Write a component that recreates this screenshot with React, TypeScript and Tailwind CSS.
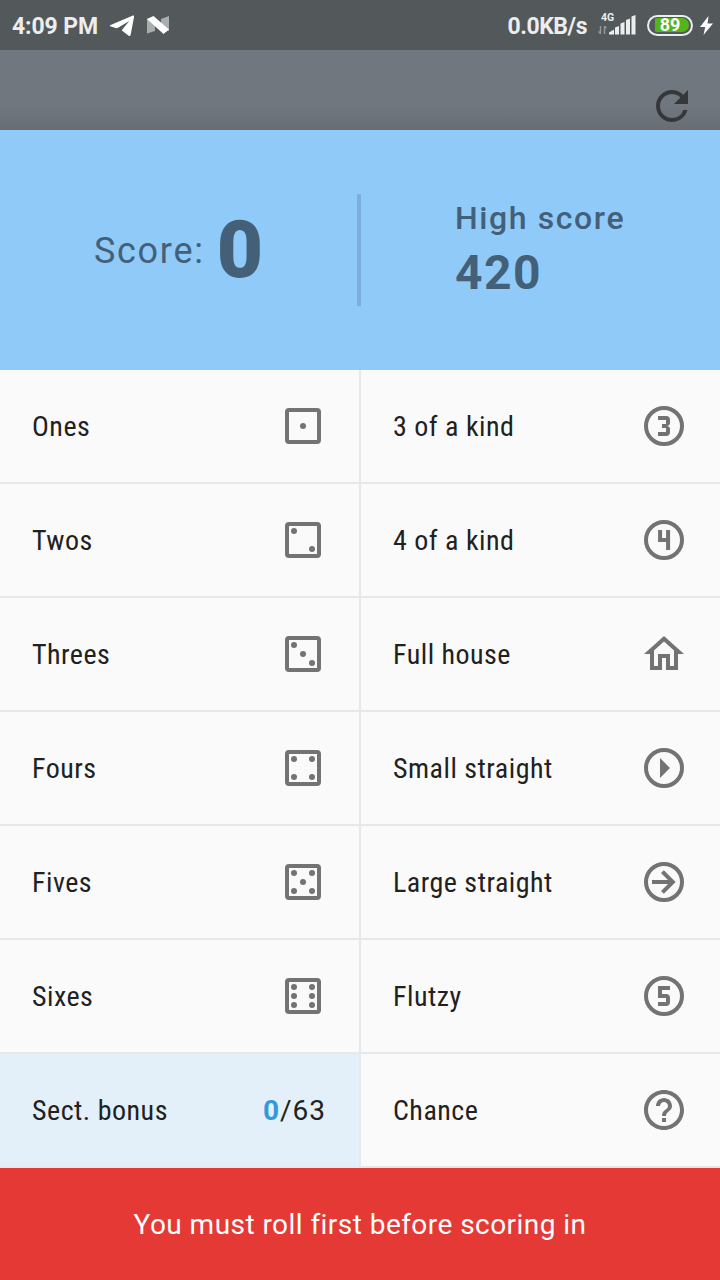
import type { ReactNode } from "react";
import {
  MdHelpOutline,
  MdOutlineHome,
  MdOutlineLooks3,
  MdOutlineLooks4,
  MdOutlineLooks5,
  MdRefresh,
} from "react-icons/md";

const PIPS: Record<number, [number, number][]> = {
  1: [[12, 12]],
  2: [[7.5, 7.5], [16.5, 16.5]],
  3: [[7.5, 7.5], [12, 12], [16.5, 16.5]],
  4: [[7.5, 7.5], [16.5, 7.5], [7.5, 16.5], [16.5, 16.5]],
  5: [[7.5, 7.5], [16.5, 7.5], [12, 12], [7.5, 16.5], [16.5, 16.5]],
  6: [[7.5, 7.5], [16.5, 7.5], [7.5, 12], [16.5, 12], [7.5, 16.5], [16.5, 16.5]],
};

function Die({ value }: { value: number }) {
  return (
    <svg viewBox="0 0 24 24" className="size-12" fill="currentColor">
      <path fillRule="evenodd" d="M5 3h14a2 2 0 0 1 2 2v14a2 2 0 0 1-2 2H5a2 2 0 0 1-2-2V5a2 2 0 0 1 2-2zM5 5v14h14V5z" />
      {PIPS[value].map(([x, y]) => (
        <circle key={`${x}-${y}`} cx={x} cy={y} r="1.5" />
      ))}
    </svg>
  );
}

function Ring({ children }: { children: ReactNode }) {
  return (
    <span className="m-1 flex size-10 items-center justify-center rounded-full border-4 border-[#737373]">
      {children}
    </span>
  );
}

const digit = "size-12 shrink-0 [clip-path:inset(25%)]";

function Play() {
  return (
    <svg viewBox="0 0 24 24" className="size-12 shrink-0" fill="currentColor">
      <path d="M10 17l5-5-5-5z" />
    </svg>
  );
}

function Arrow() {
  return (
    <svg viewBox="0 0 24 24" className="size-12 shrink-0" fill="currentColor">
      <path d="M6 13v-2h8l-3.5-3.5 1.42-1.42L17.84 12l-5.92 5.92L10.5 16.5 14 13z" />
    </svg>
  );
}

const rows: { left: string; right: string; icon: ReactNode }[] = [
  { left: "Ones", right: "3 of a kind", icon: <Ring><MdOutlineLooks3 className={digit} /></Ring> },
  { left: "Twos", right: "4 of a kind", icon: <Ring><MdOutlineLooks4 className={digit} /></Ring> },
  { left: "Threes", right: "Full house", icon: <MdOutlineHome className="size-12" /> },
  { left: "Fours", right: "Small straight", icon: <Ring><Play /></Ring> },
  { left: "Fives", right: "Large straight", icon: <Ring><Arrow /></Ring> },
  { left: "Sixes", right: "Flutzy", icon: <Ring><MdOutlineLooks5 className={digit} /></Ring> },
  { left: "Sect. bonus", right: "Chance", icon: <MdHelpOutline className="size-12" /> },
];

function Label({ children }: { children: string }) {
  return (
    <span className="whitespace-nowrap pt-0.5 font-['Roboto_Condensed',Roboto,sans-serif] text-[28px] leading-8 tracking-[0.5px] text-[#212121] [font-stretch:75%]">
      {children}
    </span>
  );
}

function StatusBar() {
  return (
    <div className="flex h-[50px] items-center bg-[#53585b] text-[#eceeee]">
      <span className="ml-3 w-[98px] whitespace-nowrap pt-1 text-[23px] font-bold leading-7 tracking-[-0.1px]">4:09 PM</span>
      <svg viewBox="0 0 24 22" className="mt-0.5 h-[22px] w-6" fill="#fff">
        <path d="M0 10.3 23 .6c.9-.3 1.3.1 1.1 1L20.6 20c-.3 1.2-1 1.4-1.9.7l-6.2-4.7c-.7-.6-.6-1.2 0-1.8L19.3 6 8 12.8c-.8.4-1.5.5-2.3.2L.2 11.3c-.6-.3-.6-.7-.2-1z" />
      </svg>
      <svg viewBox="0 0 22 18" className="ml-[13px] h-[18px] w-[22px]">
        <path d="M0 2.500 8 5v10L0 17.500zM22 0v15L14 13V3z" fill="#a9adaf" />
        <path d="M0 3 6.500 0 22 13.500 16.500 18z" fill="#fff" />
      </svg>
      <span className="ml-auto whitespace-nowrap pt-1 text-[23px] font-bold leading-7 tracking-[-0.45px]">0.0KB/s</span>
      <div className="ml-[11px] flex h-6 w-[39px] flex-col">
        <span className="ml-[3px] h-[9px] text-[10.500px] font-bold leading-[9px]">4G</span>
        <svg viewBox="0 0 39 22" className="-mt-[9px] h-[22px] w-[39px]" fill="currentColor">
          <path d="M2.5 13v8M6.5 13v8M.5 18.5l2 2M6.5 13.2l2 2" stroke="#969a9c" strokeWidth="1.4" />
          <path d="M11 21.500v-2l5-3v5zM17 14.500l4-1.500v8.500h-4zM22.500 10.500l4-1.500v12.500h-4zM28 7l4-1.500v16h-4zM33.500 3.500l4-1.500v19.500h-4z" />
        </svg>
      </div>
      <div className="ml-[10px] flex h-[21px] w-[46px] items-center rounded-full border-2 border-[#eceeee] p-[2px]">
        <div className="flex h-[14px] w-full items-center justify-center rounded-full bg-[linear-gradient(to_right,#53585b_4px,#55b31c_4px)] text-[18px] font-bold leading-[14px] text-white">
          89
        </div>
      </div>
      <svg viewBox="0 0 13 19" className="ml-[7px] mr-[7px] h-[19px] w-[13px]" fill="#fff">
        <path d="M8.500 0 0 11h5.200L3.500 19 13 7.500H7.600z" />
      </svg>
    </div>
  );
}

export default function App() {
  return (
    <div className="flex h-[1280px] w-[720px] flex-col overflow-hidden bg-[#fafafa] font-[Roboto,sans-serif]">
      <StatusBar />
      <div className="flex h-20 items-start justify-end bg-[linear-gradient(to_bottom,#71777e_0px,#71777e_56px,#676d73_80px)] pr-6 pt-8">
        <MdRefresh className="size-12 text-[#34383b]" />
      </div>
      <div className="flex h-60 items-center bg-[#90caf9] text-[#436078]">
        <div className="flex w-[357px] items-center justify-center">
          <span className="pt-0.5 text-[36px] leading-[80px] tracking-[1.7px]">Score:</span>
          <span className="ml-3 text-[80px] font-black leading-[80px]">0</span>
        </div>
        <div className="h-28 w-1 bg-[#7baedb]" />
        <div className="ml-[94px] flex flex-col">
          <span className="text-[32px] font-medium leading-10 tracking-[1.6px]">High score</span>
          <span className="mt-[5px] text-[48px] font-bold leading-[60px] tracking-[1.500px]">420</span>
        </div>
      </div>
      <div className="flex h-[798px] flex-col text-[#737373]">
        {rows.map((row, i) => (
          <div key={row.left} className="flex h-[114px]">
            <div
              className={
                i === 6
                  ? "flex w-[361px] items-center justify-between border-b-2 border-r-2 border-[#e3eaf0] bg-[#e3f0fa] pl-8 pr-[33px]"
                  : "flex w-[361px] items-center justify-between border-b-2 border-r-2 border-[#e8e8e8] pl-8 pr-8"
              }
            >
              <Label>{row.left}</Label>
              {i < 6 ? (
                <Die value={i + 1} />
              ) : (
                <span className="pt-0.5 text-[28px] leading-8 tracking-[1px] text-[#212121]">
                  <b className="font-bold text-[#3498db]">0</b>/63
                </span>
              )}
            </div>
            <div className="flex flex-1 items-center justify-between border-b-2 border-[#e8e8e8] pl-8 pr-8">
              <Label>{row.right}</Label>
              {row.icon}
            </div>
          </div>
        ))}
      </div>
      <div className="flex h-28 items-center justify-center bg-[#e53935] pt-0.5 text-[28px] leading-8 tracking-[0.45px] text-white">
        You must roll first before scoring in
      </div>
    </div>
  );
}
